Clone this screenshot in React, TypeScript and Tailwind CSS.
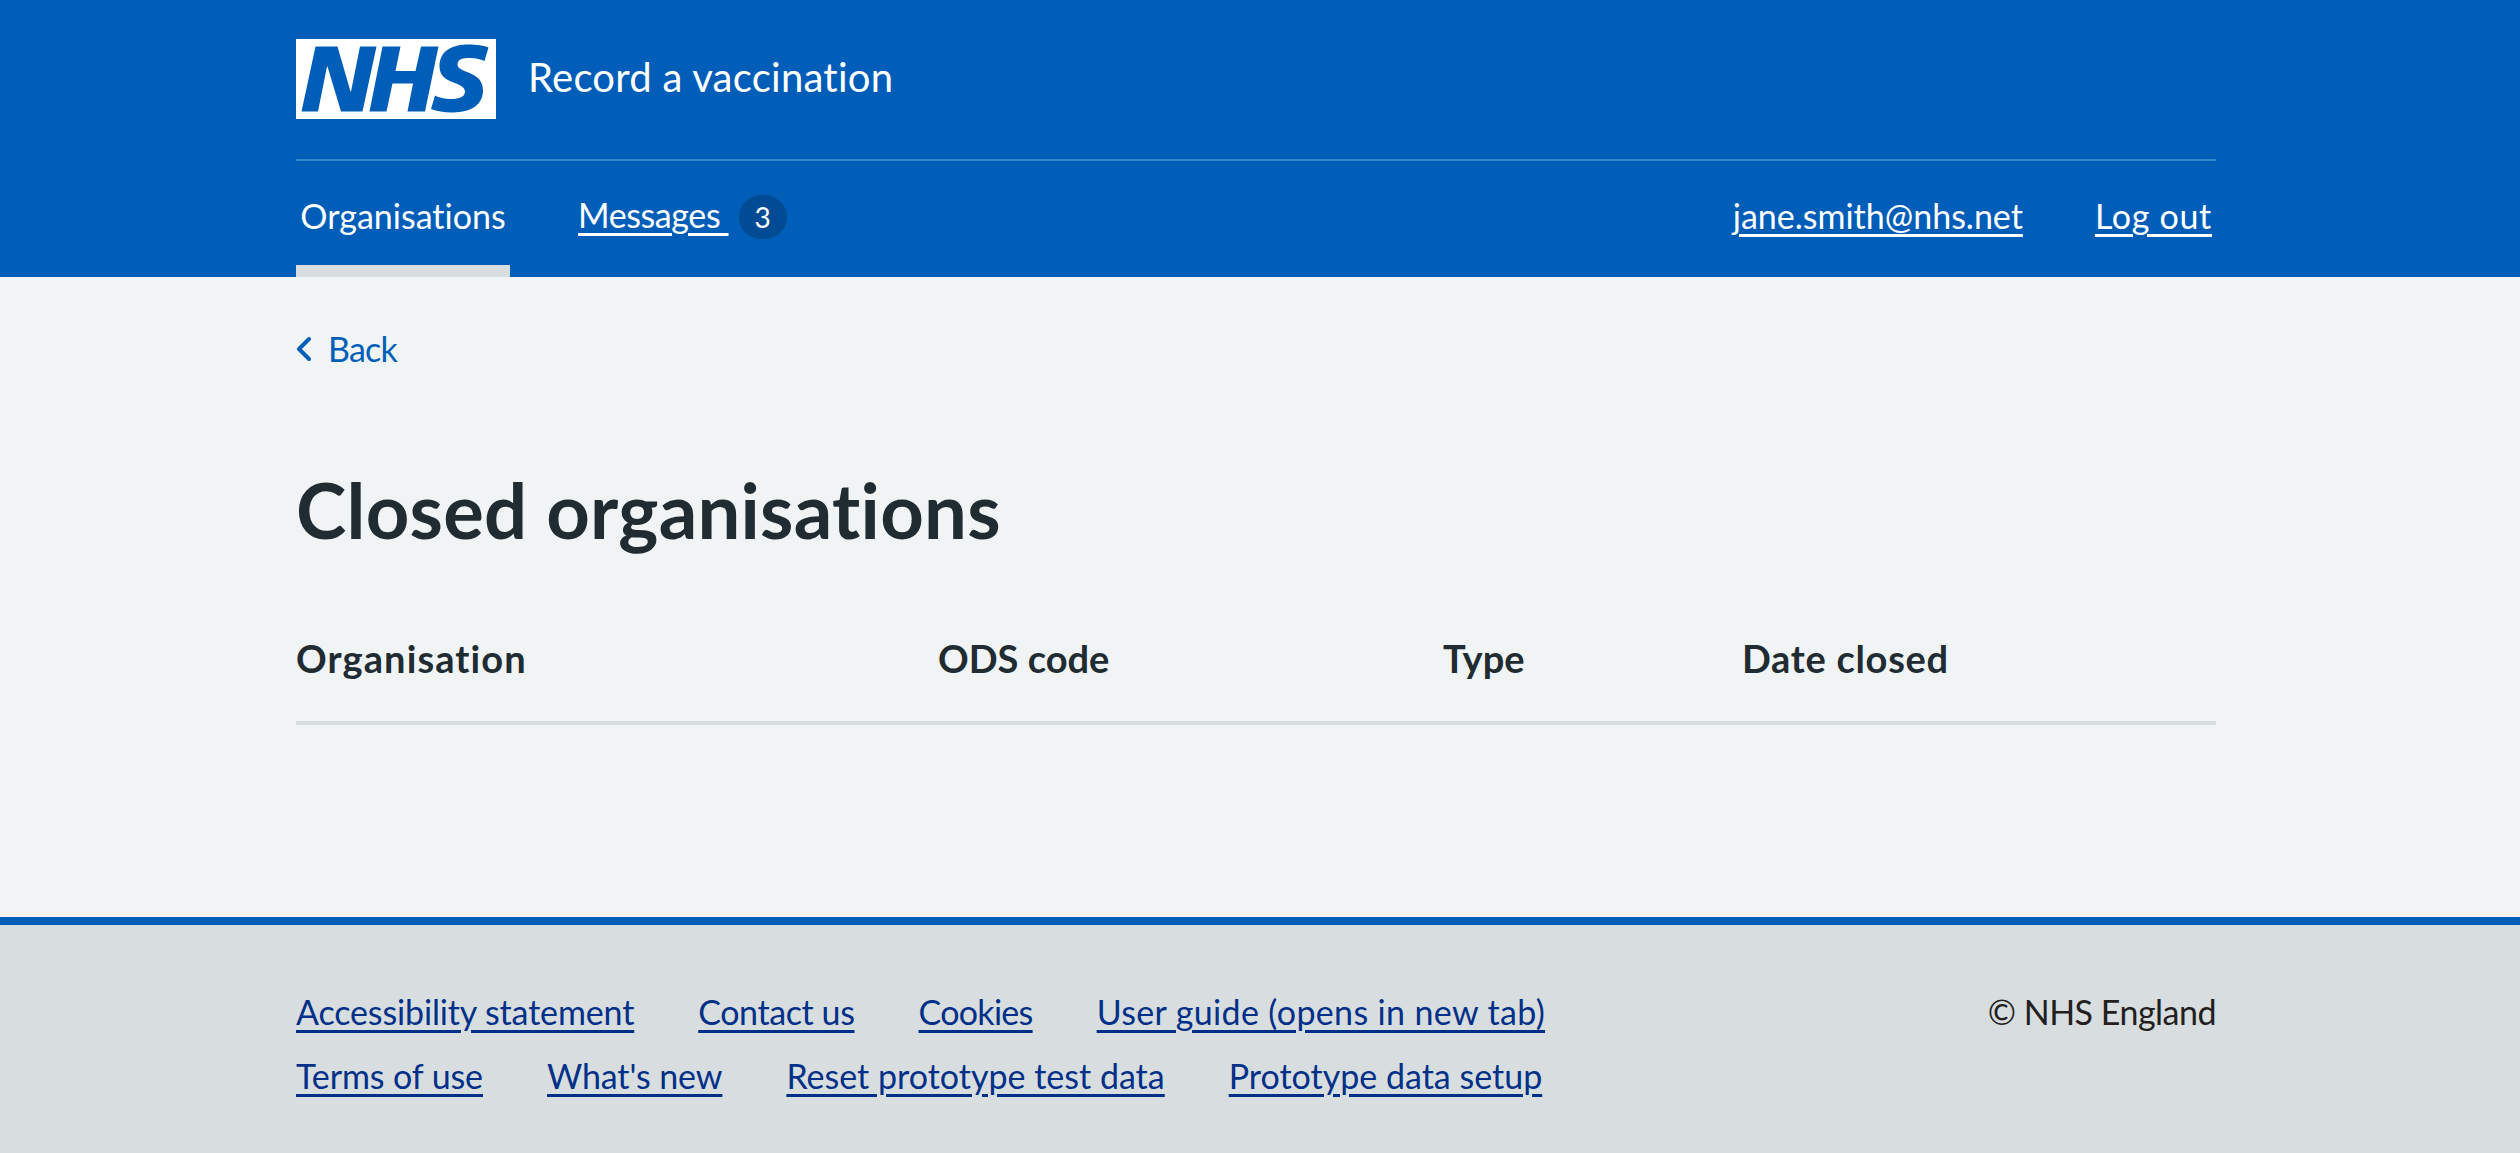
import React from 'react';

const NhsLogo = () => (
  <svg className="w-[200px] h-[80px] shrink-0" viewBox="0 0 40 16" aria-label="NHS">
    <path fill="#fff" d="M0 0h40v16H0z" />
    <path
      fill="#005eb8"
      d="M3.9 1.5h4.4l2.6 9h.1l1.8-9h3.3l-2.8 13H9l-2.7-9h-.1l-1.8 9H1.1M17.3 1.5h3.6l-1 4.9h4L25 1.5h3.5l-2.7 13h-3.5l1.1-5.6h-4.1l-1.2 5.6h-3.4M37.7 4.4c-.7-.3-1.6-.6-2.9-.6-1.4 0-2.5.2-2.5 1.3 0 1.8 5.1 1.2 5.1 5.1 0 3.6-3.3 4.5-6.4 4.5-1.3 0-2.9-.3-4-.7l.8-2.7c.7.4 2.1.7 3.2.7s2.8-.2 2.8-1.5c0-2.1-5.1-1.3-5.1-5 0-3.4 2.9-4.4 5.8-4.4 1.6 0 3.1.2 4 .6"
    />
  </svg>
);

// tracking per link: the fallback font runs a little wide or narrow against the original
const footerRows = [
  [
    { label: 'Accessibility statement', cls: 'tracking-[-0.14px]' },
    { label: 'Contact us', cls: 'tracking-[-0.4px]' },
    { label: 'Cookies', cls: 'tracking-[-0.7px]' },
    { label: 'User guide (opens in new tab)', cls: 'tracking-[0.36px]' },
  ],
  [
    { label: 'Terms of use', cls: 'tracking-[-0.1px]' },
    { label: "What's new", cls: 'tracking-[-0.1px]' },
    { label: 'Reset prototype test data', cls: 'tracking-[0px]' },
    { label: 'Prototype data setup', cls: 'tracking-[0px]' },
  ],
];

export default function App() {
  return (
    <div className="min-h-screen flex flex-col bg-[#f0f4f5] text-[#212b32] font-['Lato',sans-serif] text-[34px] [font-variant-ligatures:none]">
      <header className="bg-[#005eb8] text-white h-[277px] shrink-0">
        <div className="w-[1920px] ml-[296px]">
          <div className="flex items-center h-[161px] pb-[1px] border-b-2 border-[#3d85ca]">
            <NhsLogo />
            <span className="ml-[32px] mb-[5px] text-[40px] tracking-[0.25px]">Record a vaccination</span>
          </div>
          <nav className="flex items-start justify-between h-[116px]">
            <div className="flex">
              <a className="flex flex-col w-[214px] h-[116px] items-center pt-[29px]">
                <span className="flex-1">Organisations</span>
                <span className="w-full h-[12px] bg-[#d8dde0]" />
              </a>
              <a className="ml-[68px] mt-[29px] flex items-center h-[48px]">
                <span className="underline decoration-[3px] underline-offset-[5px] whitespace-pre tracking-[-0.4px]">Messages </span>
                <span className="ml-[10px] mt-[5px] w-[48px] h-[44px] rounded-full bg-[#004b93] flex items-center justify-center text-[28px]">3</span>
              </a>
            </div>
            <div className="flex gap-[72px] mt-[29px] pr-[4px]">
              <a className="underline decoration-[3px] underline-offset-[5px]">jane.smith@nhs.net</a>
              <a className="underline decoration-[3px] underline-offset-[5px] tracking-[0.7px]">Log out</a>
            </div>
          </nav>
        </div>
      </header>

      <main className="flex-1 w-[1920px] ml-[296px]">
        <a className="flex items-center mt-[48px] h-[48px] text-[#005eb8]">
          <svg className="w-[16px] h-[26px]" viewBox="0 0 16 26" fill="none" stroke="currentColor" strokeWidth="4" strokeLinecap="round" strokeLinejoin="round">
            <path d="M13 3 L3 13 L13 23" />
          </svg>
          <span className="ml-[16px] mb-[2px] tracking-[-0.8px]">Back</span>
        </a>
        <h1 className="mt-[89px] text-[76px] leading-[96px] font-bold tracking-[0.25px]">Closed organisations</h1>
        <table className="mt-[38px] w-full table-fixed border-b-4 border-[#d8dde0] text-left text-[38px]">
          <thead>
            <tr className="h-[127px] align-middle">
              <th className="w-[642px] font-bold tracking-[1.1px]">Organisation</th>
              <th className="w-[505px] font-bold">ODS code</th>
              <th className="w-[299px] font-bold">Type</th>
              <th className="font-bold tracking-[0.7px]">Date closed</th>
            </tr>
          </thead>
        </table>
      </main>

      <footer className="h-[236px] shrink-0 border-t-8 border-[#005eb8] bg-[#d8dde0]">
        <div className="w-[1920px] ml-[296px] flex justify-between pt-[62px]">
          <div className="flex flex-col gap-[16px]">
            {footerRows.map((row, i) => (
              <ul key={i} className="flex gap-[64px] h-[48px] items-center">
                {row.map(link => (
                  <li key={link.label}>
                    <a className={`text-[#003087] underline decoration-[3px] underline-offset-[5px] ${link.cls}`}>{link.label}</a>
                  </li>
                ))}
              </ul>
            ))}
          </div>
          <p className="h-[48px] flex items-center text-[#231f20] tracking-[-0.5px]">© NHS England</p>
        </div>
      </footer>
    </div>
  );
}
